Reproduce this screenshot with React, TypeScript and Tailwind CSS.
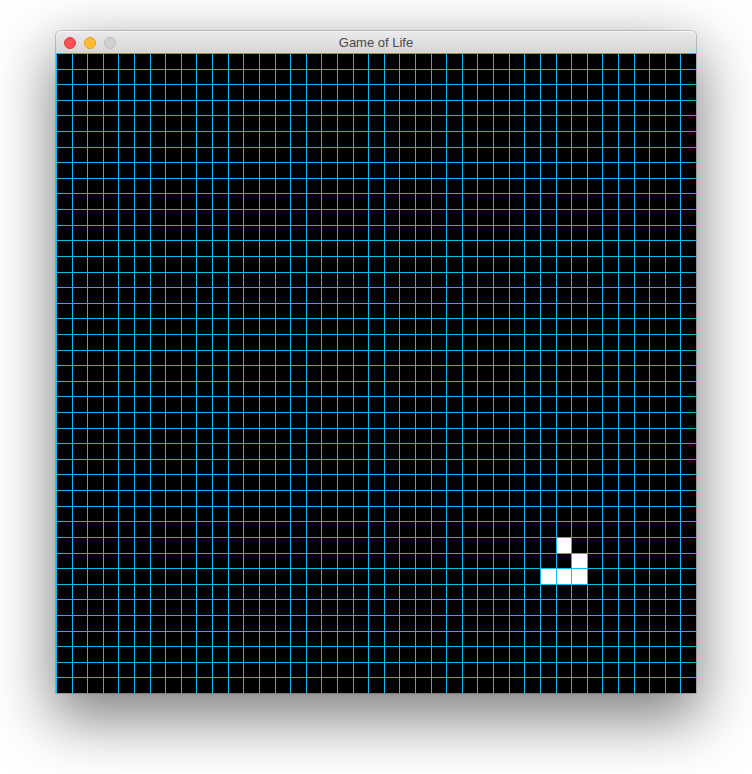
import React from 'react';

const SIZE = 41;

// glider near the bottom right, [row, col]
const alive = new Set(['31,32', '32,33', '33,31', '33,32', '33,33']);

const TrafficLights = () => (
  <div className="absolute left-[8px] top-0 h-full flex items-center gap-[8px]">
    <span className="w-[12px] h-[12px] rounded-full bg-[#fc4f56] border border-[#e0393f]" />
    <span className="w-[12px] h-[12px] rounded-full bg-[#fdbb2d] border border-[#e0a21c]" />
    <span className="w-[12px] h-[12px] rounded-full bg-[#d2d0d2] border border-[#bfbdbf]" />
  </div>
);

const Board = () => {
  const cells = [];
  for (let r = 0; r < SIZE; r++) {
    for (let c = 0; c < SIZE; c++) {
      const on = alive.has(`${r},${c}`);
      cells.push(
        <div
          key={`${r}-${c}`}
          className={
            on
              ? 'border-t border-l border-[#0bbcf5] bg-white'
              : 'border-t border-l border-[#0bbcf5] bg-black'
          }
        />
      );
    }
  }
  return (
    <div className="w-[640px] h-[640px] grid grid-cols-[repeat(41,minmax(0,1fr))] grid-rows-[repeat(41,minmax(0,1fr))] bg-black">
      {cells}
    </div>
  );
};

export default function App() {
  return (
    <div className="w-[752px] h-[774px] bg-white flex justify-center pt-[31px] font-['Liberation_Sans',Arial,sans-serif]">
      <div className="w-[640px] h-[662px] flex flex-col rounded-t-[5px] shadow-[0_22px_60px_4px_rgba(0,0,0,0.5),0_0_0_1px_rgba(0,0,0,0.18)]">
        <div className="relative h-[22px] rounded-t-[5px] bg-gradient-to-b from-[#ebe9eb] to-[#d6d4d6] border-t border-[#f6f6f6] flex items-center justify-center">
          <TrafficLights />
          <span className="text-[13px] text-[#4a4a4a] leading-none">Game of Life</span>
        </div>
        <Board />
      </div>
    </div>
  );
}
